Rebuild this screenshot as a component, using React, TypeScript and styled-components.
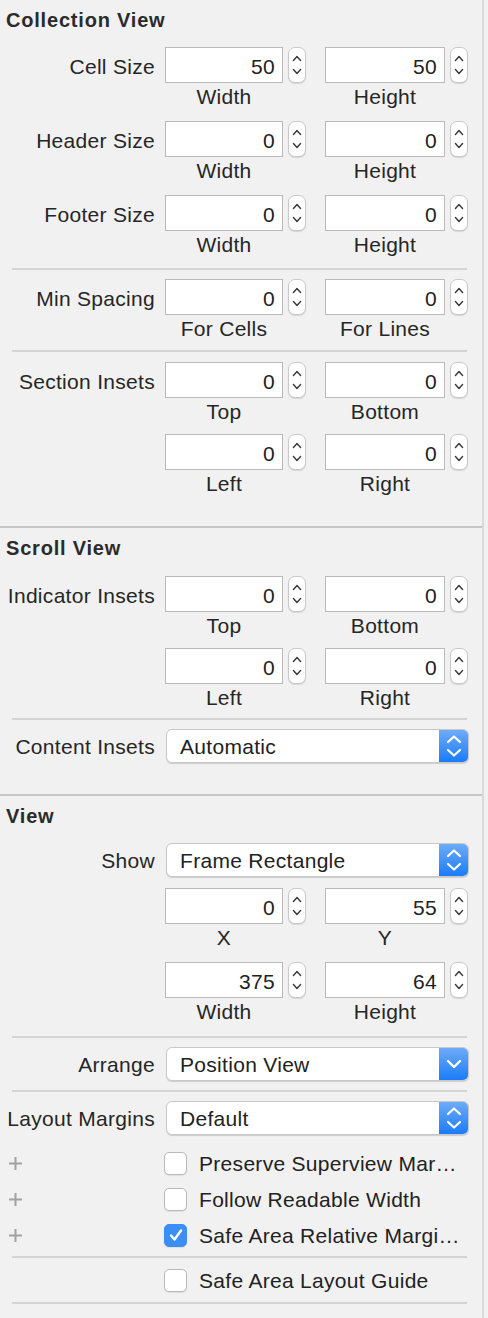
import React from 'react';
import styled, { createGlobalStyle } from 'styled-components';

const GlobalStyle = createGlobalStyle`
  html, body {
    margin: 0;
    padding: 0;
    background: #f1f1f1;
  }
  body {
    font-family: "Liberation Sans", Arial, sans-serif;
    color: #262626;
  }
`;

const Panel = styled.div`
  width: 482px;
  min-height: 1318px;
  border-right: 2px solid #dadada;
  background: #f1f1f1;
  font-size: 21px;
  letter-spacing: 0.3px;
`;

const Section = styled.div<{ $pad?: number }>`
  padding-bottom: ${p => p.$pad ?? 0}px;
`;

const SectionDivider = styled.div`
  height: 2px;
  background: #c6c6c6;
`;

const Heading = styled.div`
  height: 38px;
  line-height: 40px;
  padding-left: 6px;
  font-size: 20px;
  font-weight: bold;
  letter-spacing: 0.8px;
  color: #2b2b2b;
`;

const Body = styled.div<{ $top?: number }>`
  padding-top: ${p => p.$top ?? 9}px;
  display: flex;
  flex-direction: column;
`;

const Separator = styled.div<{ $top: number; $bottom: number }>`
  height: 2px;
  margin: ${p => p.$top}px 15px ${p => p.$bottom}px 12px;
  background: #d4d4d4;
`;

const FieldRow = styled.div<{ $gap?: number }>`
  display: flex;
  align-items: flex-start;
  margin-top: ${p => p.$gap ?? 0}px;
`;

const Label = styled.div`
  width: 155px;
  margin-right: 10px;
  height: 36px;
  line-height: 39px;
  text-align: right;
  white-space: nowrap;
`;

const LabelSpacer = styled.div`
  width: 165px;
  flex: none;
`;

const InputGroup = styled.div<{ $w: number }>`
  display: grid;
  grid-template-columns: ${p => p.$w}px 18px;
  grid-template-rows: 36px 26px;
  column-gap: 5px;
`;

const TextField = styled.div`
  box-sizing: border-box;
  height: 36px;
  background: #fff;
  border: 1px solid #bababa;
  text-align: right;
  padding-right: 7px;
  line-height: 37px;
  color: #222;
`;

const Caption = styled.div`
  grid-column: 1;
  text-align: center;
  line-height: 27px;
  white-space: nowrap;
`;

const StepperBox = styled.div`
  box-sizing: border-box;
  width: 18px;
  height: 36px;
  background: #fff;
  border: 1px solid #c9c9c9;
  border-radius: 7px;
  box-shadow: 0 1px 1px rgba(0, 0, 0, 0.12);
  display: flex;
  align-items: center;
  justify-content: center;
`;

const Popup = styled.div<{ $top: number }>`
  box-sizing: border-box;
  margin-top: ${p => p.$top}px;
  width: 303px;
  height: 34px;
  background: #fff;
  border: 1px solid #c8c8c8;
  border-radius: 6px;
  box-shadow: 0 1px 1px rgba(0, 0, 0, 0.15);
  display: flex;
  overflow: hidden;
  margin-left: 1px;
`;

const PopupText = styled.div`
  flex: 1;
  padding-left: 13px;
  line-height: 34px;
  color: #222;
`;

const PopupArrow = styled.div`
  width: 29px;
  background: linear-gradient(#6eabf8, #1a7cf7);
  display: flex;
  align-items: center;
  justify-content: center;
`;

const CheckRow = styled.div`
  display: flex;
  align-items: center;
  height: 36px;
`;

const PlusCell = styled.div`
  width: 156px;
  padding-left: 8px;
  display: flex;
  align-items: center;
`;

const Box = styled.div<{ $on?: boolean }>`
  box-sizing: border-box;
  width: 23px;
  height: 23px;
  border-radius: 5px;
  background: ${p => (p.$on ? '#3a8ef6' : '#fff')};
  border: 1px solid ${p => (p.$on ? '#3a8ef6' : '#b9b9b9')};
  box-shadow: 0 1px 1px rgba(0, 0, 0, 0.08);
  display: flex;
  align-items: center;
  justify-content: center;
`;

const CheckText = styled.div`
  margin-left: 12px;
  padding-top: 2px;
  white-space: nowrap;
  color: #222;
`;

const Stepper = () => (
  <StepperBox>
    <svg width="18" height="36" viewBox="0 0 18 36">
      <path d="M5 13 L9 8.5 L13 13" fill="none" stroke="#3a3a3a" strokeWidth="1.6" strokeLinecap="round" strokeLinejoin="round" />
      <path d="M5 23 L9 27.5 L13 23" fill="none" stroke="#3a3a3a" strokeWidth="1.6" strokeLinecap="round" strokeLinejoin="round" />
    </svg>
  </StepperBox>
);

type Pair = { value: string; caption: string };

const Fields = ({ label, a, b, gap }: { label?: string; a: Pair; b: Pair; gap?: number }) => (
  <FieldRow $gap={gap}>
    {label ? <Label>{label}</Label> : <LabelSpacer />}
    <InputGroup $w={118} style={{ marginRight: 19 }}>
      <TextField>{a.value}</TextField>
      <Stepper />
      <Caption>{a.caption}</Caption>
    </InputGroup>
    <InputGroup $w={120}>
      <TextField>{b.value}</TextField>
      <Stepper />
      <Caption>{b.caption}</Caption>
    </InputGroup>
  </FieldRow>
);

const PopupRow = ({ label, value, single, top }: { label: string; value: string; single?: boolean; top: number }) => (
  <FieldRow $gap={0}>
    <Label style={{ marginTop: top, height: 34, lineHeight: '36px' }}>{label}</Label>
    <Popup $top={top}>
      <PopupText>{value}</PopupText>
      <PopupArrow>
        {single ? (
          <svg width="16" height="16" viewBox="0 0 16 16">
            <path d="M2 5 L8 11 L14 5" fill="none" stroke="#fff" strokeWidth="2.4" strokeLinecap="round" strokeLinejoin="round" />
          </svg>
        ) : (
          <svg width="16" height="24" viewBox="0 0 16 24">
            <path d="M2 8 L8 2.5 L14 8" fill="none" stroke="#fff" strokeWidth="2.2" strokeLinecap="round" strokeLinejoin="round" />
            <path d="M2 16 L8 21.5 L14 16" fill="none" stroke="#fff" strokeWidth="2.2" strokeLinecap="round" strokeLinejoin="round" />
          </svg>
        )}
      </PopupArrow>
    </Popup>
  </FieldRow>
);

const Plus = () => (
  <svg width="15" height="15" viewBox="0 0 15 15">
    <path d="M7.5 1 V14 M1 7.5 H14" stroke="#a2a2a2" strokeWidth="2" />
  </svg>
);

const Check = ({ on, text, plus }: { on?: boolean; text: string; plus?: boolean }) => (
  <CheckRow>
    <PlusCell>{plus && <Plus />}</PlusCell>
    <Box $on={on}>
      {on && (
        <svg width="16" height="16" viewBox="0 0 16 16">
          <path d="M3 8.5 L6.5 12.5 L13 3.5" fill="none" stroke="#fff" strokeWidth="2.4" strokeLinecap="round" strokeLinejoin="round" />
        </svg>
      )}
    </Box>
    <CheckText>{text}</CheckText>
  </CheckRow>
);

const App: React.FC = () => {
  return (
    <>
      <GlobalStyle />
      <Panel>
        <Section $pad={30}>
          <Heading>Collection View</Heading>
          <Body>
            <Fields label="Cell Size" a={{ value: '50', caption: 'Width' }} b={{ value: '50', caption: 'Height' }} />
            <Fields label="Header Size" gap={12} a={{ value: '0', caption: 'Width' }} b={{ value: '0', caption: 'Height' }} />
            <Fields label="Footer Size" gap={12} a={{ value: '0', caption: 'Width' }} b={{ value: '0', caption: 'Height' }} />
            <Separator $top={11} $bottom={9} />
            <Fields label="Min Spacing" a={{ value: '0', caption: 'For Cells' }} b={{ value: '0', caption: 'For Lines' }} />
            <Separator $top={9} $bottom={10} />
            <Fields label="Section Insets" a={{ value: '0', caption: 'Top' }} b={{ value: '0', caption: 'Bottom' }} />
            <Fields gap={10} a={{ value: '0', caption: 'Left' }} b={{ value: '0', caption: 'Right' }} />
          </Body>
        </Section>
        <SectionDivider />
        <Section $pad={31}>
          <Heading>Scroll View</Heading>
          <Body $top={10}>
            <Fields label="Indicator Insets" a={{ value: '0', caption: 'Top' }} b={{ value: '0', caption: 'Bottom' }} />
            <Fields gap={10} a={{ value: '0', caption: 'Left' }} b={{ value: '0', caption: 'Right' }} />
            <Separator $top={8} $bottom={0} />
            <PopupRow label="Content Insets" value="Automatic" top={9} />
          </Body>
        </Section>
        <SectionDivider />
        <Section>
          <Heading>View</Heading>
          <Body>
            <PopupRow label="Show" value="Frame Rectangle" top={0} />
            <div style={{ height: 11 }} />
            <Fields a={{ value: '0', caption: 'X' }} b={{ value: '55', caption: 'Y' }} />
            <Fields gap={12} a={{ value: '375', caption: 'Width' }} b={{ value: '64', caption: 'Height' }} />
            <Separator $top={12} $bottom={0} />
            <PopupRow label="Arrange" value="Position View" single top={9} />
            <Separator $top={9} $bottom={0} />
            <PopupRow label="Layout Margins" value="Default" top={9} />
            <div style={{ height: 10 }} />
            <Check plus text="Preserve Superview Mar…" />
            <Check plus text="Follow Readable Width" />
            <Check plus on text="Safe Area Relative Margi…" />
            <Separator $top={3} $bottom={4} />
            <Check text="Safe Area Layout Guide" />
            <Separator $top={4} $bottom={0} />
          </Body>
        </Section>
      </Panel>
    </>
  );
};

export default App;
